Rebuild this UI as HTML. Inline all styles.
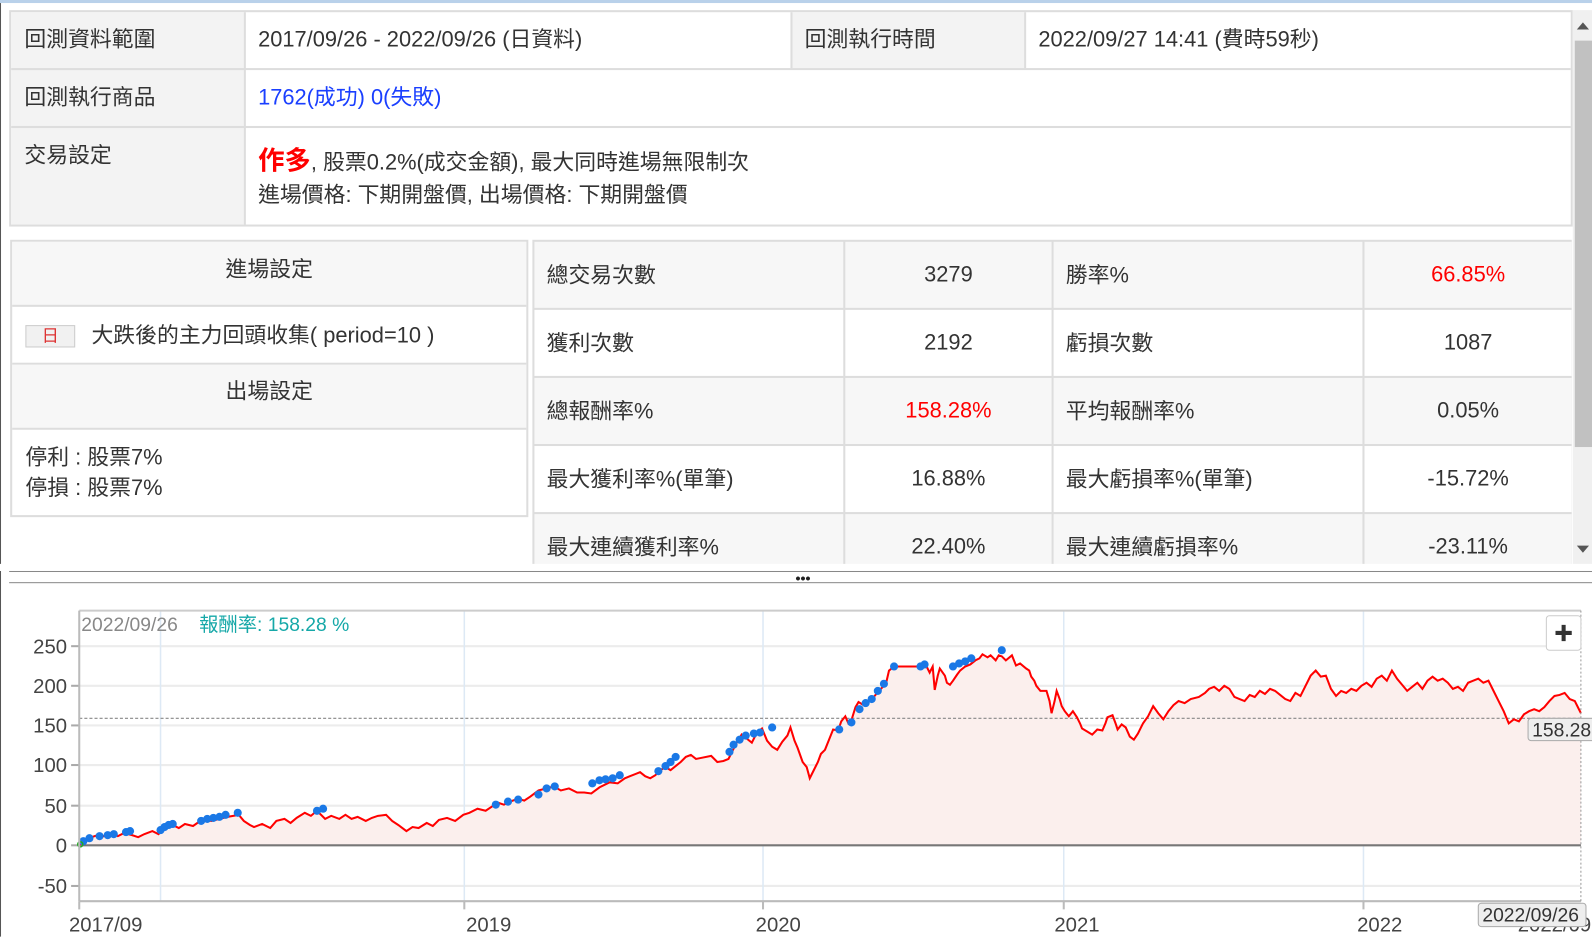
<!DOCTYPE html>
<html><head><meta charset="utf-8">
<style>
html,body{margin:0;padding:0;background:#fff;overflow:hidden;width:1592px;height:937px}
#w{position:absolute;left:0;top:0;width:1567px;height:922px;overflow:hidden;transform:scale(1.016);transform-origin:0 0;font-family:"Liberation Sans","Noto Sans CJK TC",sans-serif;color:#333}
.a{position:absolute;box-sizing:border-box}
.t{font-size:21.5px;line-height:1;white-space:nowrap}
.g{background:#f3f3f3}
.b{border:2px solid #ddd}
td{white-space:nowrap}
</style></head><body><div id="w">
<div class="a" style="left:0;top:0;width:1567px;height:3px;background:#b9d1ea"></div>
<div class="a" style="left:0;top:3px;width:1px;height:919px;background:#555"></div>

<div class="a b" style="left:9px;top:10px;width:1539px;height:213px"></div>
<div class="a g" style="left:11px;top:12px;width:229px;height:209px"></div>
<div class="a g" style="left:778px;top:12px;width:230px;height:55px"></div>
<div class="a" style="left:240px;top:12px;width:2px;height:209px;background:#ddd"></div>
<div class="a" style="left:778px;top:12px;width:2px;height:55px;background:#ddd"></div>
<div class="a" style="left:1008px;top:12px;width:2px;height:55px;background:#ddd"></div>
<div class="a" style="left:11px;top:67px;width:1535px;height:2px;background:#ddd"></div>
<div class="a" style="left:11px;top:124px;width:1535px;height:2px;background:#ddd"></div>
<div class="a t" style="left:24px;top:29px">回測資料範圍</div>
<div class="a t" style="left:254px;top:29px">2017/09/26 - 2022/09/26 (日資料)</div>
<div class="a t" style="left:792px;top:29px">回測執行時間</div>
<div class="a t" style="left:1022px;top:29px">2022/09/27 14:41 (費時59秒)</div>
<div class="a t" style="left:24px;top:86px">回測執行商品</div>
<div class="a t" style="left:254px;top:86px;color:#1a3fff">1762(成功) 0(失敗)</div>
<div class="a t" style="left:24px;top:143px">交易設定</div>
<div class="a t" style="left:254px;top:145px"><span style="color:#f00;font-size:26px;font-weight:bold">作多</span>, 股票0.2%(成交金額), 最大同時進場無限制次</div>
<div class="a t" style="left:254px;top:182px">進場價格: 下期開盤價, 出場價格: 下期開盤價</div>

<div class="a" style="left:1548px;top:10px;width:19px;height:545px;background:#f0f0f0"></div>
<div class="a" style="left:1550px;top:40px;width:17px;height:400px;background:#c1c1c1"></div>
<div class="a" style="left:1552px;top:22px;width:0;height:0;border-left:6px solid transparent;border-right:6px solid transparent;border-bottom:7px solid #555"></div>
<div class="a" style="left:1552px;top:537px;width:0;height:0;border-left:6px solid transparent;border-right:6px solid transparent;border-top:7px solid #555"></div>

<div class="a b" style="left:10px;top:236px;width:510px;height:273px;background:#fff"></div>
<div class="a" style="left:12px;top:238px;width:506px;height:62px;background:#f7f7f7"></div>
<div class="a" style="left:12px;top:300px;width:506px;height:2px;background:#ddd"></div>
<div class="a" style="left:12px;top:357px;width:506px;height:2px;background:#ddd"></div>
<div class="a" style="left:12px;top:359px;width:506px;height:62px;background:#f7f7f7"></div>
<div class="a" style="left:12px;top:421px;width:506px;height:2px;background:#ddd"></div>
<div class="a t" style="left:12px;width:506px;top:255px;text-align:center">進場設定</div>
<div class="a t" style="left:12px;width:506px;top:375px;text-align:center">出場設定</div>
<div class="a" style="left:25px;top:320px;width:49px;height:22px;background:#f1f1f1;border:1px solid #ccc;color:#d33;font-size:17px;text-align:center;line-height:20px">日</div>
<div class="a t" style="left:90px;top:320px">大跌後的主力回頭收集( period=10 )</div>
<div class="a t" style="left:25px;top:440px">停利 : 股票7%</div>
<div class="a t" style="left:25px;top:470px">停損 : 股票7%</div>

<div class="a" style="left:524px;top:236px;width:1023px;height:320px;background:#ddd;overflow:hidden">
<div style="position:absolute;left:2px;top:2px;width:1019px">
<table style="border-collapse:separate;border-spacing:2px 2px;margin:-2px;font-size:21.5px;width:1023px;table-layout:fixed">
<colgroup><col style="width:304px"><col style="width:203px"><col style="width:304px"><col style="width:204px"></colgroup>
<tr style="background:#f7f7f7;height:65px"><td style="padding:0 12px;vertical-align:top;padding-top:16px">總交易次數</td><td style="text-align:center">3279</td><td style="padding:0 12px;vertical-align:top;padding-top:16px">勝率%</td><td style="text-align:center;color:#f00">66.85%</td></tr>
<tr style="background:#fff;height:65px"><td style="padding:0 12px;vertical-align:top;padding-top:16px">獲利次數</td><td style="text-align:center">2192</td><td style="padding:0 12px;vertical-align:top;padding-top:16px">虧損次數</td><td style="text-align:center">1087</td></tr>
<tr style="background:#f7f7f7;height:65px"><td style="padding:0 12px;vertical-align:top;padding-top:16px">總報酬率%</td><td style="text-align:center;color:#f00">158.28%</td><td style="padding:0 12px;vertical-align:top;padding-top:16px">平均報酬率%</td><td style="text-align:center">0.05%</td></tr>
<tr style="background:#fff;height:65px"><td style="padding:0 12px;vertical-align:top;padding-top:16px">最大獲利率%(單筆)</td><td style="text-align:center">16.88%</td><td style="padding:0 12px;vertical-align:top;padding-top:16px">最大虧損率%(單筆)</td><td style="text-align:center">-15.72%</td></tr>
<tr style="background:#f7f7f7;height:65px"><td style="padding:0 12px;vertical-align:top;padding-top:16px">最大連續獲利率%</td><td style="text-align:center">22.40%</td><td style="padding:0 12px;vertical-align:top;padding-top:16px">最大連續虧損率%</td><td style="text-align:center">-23.11%</td></tr>
</table></div></div>
<div class="a" style="left:0;top:555px;width:1548px;height:7px;background:#fff"></div>

<div class="a" style="left:9px;top:562px;width:1558px;height:1px;background:#888"></div>
<div class="a" style="left:9px;top:573px;width:1558px;height:1px;background:#888"></div>
<div class="a" style="left:783px;top:563px;font-size:14px;line-height:12px;color:#222;font-weight:bold">•••</div>

<svg class="a" style="left:0;top:590px" width="1567" height="332" viewBox="0 590 1567 332" font-family="Liberation Sans, Noto Sans CJK TC, sans-serif">
<g stroke="#ececec" stroke-width="2">
<line x1="78" x2="1556" y1="636" y2="636"/><line x1="78" x2="1556" y1="675" y2="675"/><line x1="78" x2="1556" y1="714" y2="714"/><line x1="78" x2="1556" y1="753" y2="753"/><line x1="78" x2="1556" y1="793" y2="793"/><line x1="78" x2="1556" y1="872" y2="872"/>
</g>
<g stroke="#dde9f5" stroke-width="1.5">
<line x1="158" x2="158" y1="601" y2="887"/><line x1="457" x2="457" y1="601" y2="887"/><line x1="751" x2="751" y1="601" y2="887"/><line x1="1047" x2="1047" y1="601" y2="887"/><line x1="1342" x2="1342" y1="601" y2="887"/>
</g>
<g stroke="#aaa" stroke-width="2"><line x1="70" x2="78" y1="636" y2="636"/><line x1="70" x2="78" y1="675" y2="675"/><line x1="70" x2="78" y1="714" y2="714"/><line x1="70" x2="78" y1="753" y2="753"/><line x1="70" x2="78" y1="793" y2="793"/><line x1="70" x2="78" y1="832" y2="832"/><line x1="70" x2="78" y1="872" y2="872"/></g>
<polyline points="78,601 1556,601" stroke="#ccc" stroke-width="2" fill="none"/>
<polygon fill="#fbefed" stroke="none" points="78,832 84,826 90,824 96,822 102,823 110,820 116,823 122,820 130,822 136,824 142,821 150,818 156,821 162,815 170,812 176,815 182,811 190,813 200,806 208,808 216,806 224,804 235,802 240,808 246,812 250,814 258,811 266,815 272,808 280,806 286,810 292,805 300,800 306,803 312,798 320,806 326,803 334,806 340,802 346,806 352,804 360,808 366,805 372,803 380,802 386,808 392,812 400,818 406,814 412,815 420,810 426,813 432,807 440,805 448,808 456,802 462,800 470,796 478,798 484,794 490,790 496,792 502,789 510,786 516,788 522,784 530,778 538,776 545,774 552,778 560,776 568,780 575,780 582,781 590,775 600,770 608,771 615,766 620,764 630,760 635,764 640,766 645,763 650,758 655,755 660,758 670,750 675,745 680,743 685,747 690,746 700,744 706,750 712,749 717,747 725,731 730,723 735,727 740,731 745,721 750,717 755,729 760,735 765,738 770,730 775,724 778,716 782,729 785,736 790,750 794,755 797,766 801,758 805,750 808,742 812,738 816,728 820,718 825,719 828,710 832,705 835,712 838,709 842,696 845,691 850,694 855,691 860,686 865,680 870,675 872,673 875,660 880,656 912,656 915,662 918,656 920,679 923,665 925,658 930,665 932,672 935,674 938,670 942,664 945,660 950,656 955,654 960,650 964,648 967,644 972,647 975,645 980,650 983,645 986,646 990,650 996,645 1000,655 1004,653 1010,658 1013,660 1015,666 1018,670 1020,675 1024,680 1030,680 1033,690 1035,702 1038,690 1040,680 1043,688 1045,695 1048,700 1052,705 1056,700 1060,706 1063,712 1065,717 1070,720 1075,723 1080,718 1085,719 1088,712 1090,706 1095,704 1098,712 1100,718 1104,713 1108,716 1112,725 1116,728 1120,722 1123,716 1125,712 1130,705 1135,695 1140,702 1145,708 1150,700 1155,694 1160,690 1166,692 1172,688 1180,686 1186,682 1190,678 1195,676 1200,680 1205,675 1210,678 1215,686 1220,688 1225,690 1230,684 1235,686 1240,680 1245,683 1250,678 1255,680 1260,684 1265,688 1270,690 1275,682 1280,685 1285,675 1290,665 1295,660 1300,666 1305,665 1310,678 1315,685 1320,680 1325,682 1330,678 1335,680 1340,675 1345,672 1350,676 1355,668 1360,665 1365,670 1370,660 1375,668 1380,674 1385,680 1390,676 1395,672 1400,678 1405,670 1410,666 1415,670 1420,668 1425,672 1430,678 1435,676 1440,680 1445,672 1450,670 1455,668 1460,672 1465,670 1470,680 1475,690 1480,700 1485,712 1490,708 1495,710 1500,703 1505,700 1510,698 1515,700 1520,696 1525,690 1530,685 1535,684 1540,682 1545,688 1550,690 1553,696 1556,702 1556,832"/>
<line x1="78" x2="1556" y1="832" y2="832" stroke="#777" stroke-width="2"/>
<line x1="78" x2="1556" y1="707" y2="707" stroke="#888" stroke-width="1" stroke-dasharray="3,2"/>
<polyline fill="none" stroke="#f00" stroke-width="2" points="78,832 84,826 90,824 96,822 102,823 110,820 116,823 122,820 130,822 136,824 142,821 150,818 156,821 162,815 170,812 176,815 182,811 190,813 200,806 208,808 216,806 224,804 235,802 240,808 246,812 250,814 258,811 266,815 272,808 280,806 286,810 292,805 300,800 306,803 312,798 320,806 326,803 334,806 340,802 346,806 352,804 360,808 366,805 372,803 380,802 386,808 392,812 400,818 406,814 412,815 420,810 426,813 432,807 440,805 448,808 456,802 462,800 470,796 478,798 484,794 490,790 496,792 502,789 510,786 516,788 522,784 530,778 538,776 545,774 552,778 560,776 568,780 575,780 582,781 590,775 600,770 608,771 615,766 620,764 630,760 635,764 640,766 645,763 650,758 655,755 660,758 670,750 675,745 680,743 685,747 690,746 700,744 706,750 712,749 717,747 725,731 730,723 735,727 740,731 745,721 750,717 755,729 760,735 765,738 770,730 775,724 778,716 782,729 785,736 790,750 794,755 797,766 801,758 805,750 808,742 812,738 816,728 820,718 825,719 828,710 832,705 835,712 838,709 842,696 845,691 850,694 855,691 860,686 865,680 870,675 872,673 875,660 880,656 912,656 915,662 918,656 920,679 923,665 925,658 930,665 932,672 935,674 938,670 942,664 945,660 950,656 955,654 960,650 964,648 967,644 972,647 975,645 980,650 983,645 986,646 990,650 996,645 1000,655 1004,653 1010,658 1013,660 1015,666 1018,670 1020,675 1024,680 1030,680 1033,690 1035,702 1038,690 1040,680 1043,688 1045,695 1048,700 1052,705 1056,700 1060,706 1063,712 1065,717 1070,720 1075,723 1080,718 1085,719 1088,712 1090,706 1095,704 1098,712 1100,718 1104,713 1108,716 1112,725 1116,728 1120,722 1123,716 1125,712 1130,705 1135,695 1140,702 1145,708 1150,700 1155,694 1160,690 1166,692 1172,688 1180,686 1186,682 1190,678 1195,676 1200,680 1205,675 1210,678 1215,686 1220,688 1225,690 1230,684 1235,686 1240,680 1245,683 1250,678 1255,680 1260,684 1265,688 1270,690 1275,682 1280,685 1285,675 1290,665 1295,660 1300,666 1305,665 1310,678 1315,685 1320,680 1325,682 1330,678 1335,680 1340,675 1345,672 1350,676 1355,668 1360,665 1365,670 1370,660 1375,668 1380,674 1385,680 1390,676 1395,672 1400,678 1405,670 1410,666 1415,670 1420,668 1425,672 1430,678 1435,676 1440,680 1445,672 1450,670 1455,668 1460,672 1465,670 1470,680 1475,690 1480,700 1485,712 1490,708 1495,710 1500,703 1505,700 1510,698 1515,700 1520,696 1525,690 1530,685 1535,684 1540,682 1545,688 1550,690 1553,696 1556,702"/>
<g fill="#1a78e6">
<circle cx="82" cy="828" r="4"/><circle cx="88" cy="825" r="4"/><circle cx="98" cy="823" r="4"/><circle cx="106" cy="822" r="4"/><circle cx="112" cy="821" r="4"/><circle cx="124" cy="819" r="4"/><circle cx="128" cy="818" r="4"/>
<circle cx="158" cy="817" r="4"/><circle cx="162" cy="814" r="4"/><circle cx="166" cy="812" r="4"/><circle cx="170" cy="811" r="4"/>
<circle cx="198" cy="808" r="4"/><circle cx="204" cy="806" r="4"/><circle cx="210" cy="805" r="4"/><circle cx="216" cy="804" r="4"/><circle cx="222" cy="802" r="4"/><circle cx="234" cy="800" r="4"/>
<circle cx="312" cy="798" r="4"/><circle cx="318" cy="796" r="4"/>
<circle cx="488" cy="792" r="4"/><circle cx="500" cy="789" r="4"/><circle cx="510" cy="787" r="4"/><circle cx="530" cy="782" r="4"/><circle cx="538" cy="776" r="4"/><circle cx="546" cy="774" r="4"/>
<circle cx="583" cy="771" r="4"/><circle cx="590" cy="768" r="4"/><circle cx="596" cy="767" r="4"/><circle cx="603" cy="766" r="4"/><circle cx="610" cy="763" r="4"/>
<circle cx="648" cy="759" r="4"/><circle cx="655" cy="754" r="4"/><circle cx="660" cy="750" r="4"/><circle cx="665" cy="745" r="4"/>
<circle cx="718" cy="740" r="4"/><circle cx="722" cy="733" r="4"/><circle cx="728" cy="728" r="4"/><circle cx="734" cy="724" r="4"/><circle cx="742" cy="722" r="4"/><circle cx="748" cy="721" r="4"/><circle cx="760" cy="716" r="4"/>
<circle cx="826" cy="718" r="4"/><circle cx="838" cy="711" r="4"/><circle cx="846" cy="698" r="4"/><circle cx="852" cy="692" r="4"/><circle cx="858" cy="688" r="4"/><circle cx="864" cy="680" r="4"/><circle cx="870" cy="673" r="4"/><circle cx="880" cy="656" r="4"/>
<circle cx="906" cy="656" r="4"/><circle cx="910" cy="654" r="4"/><circle cx="938" cy="656" r="4"/><circle cx="944" cy="653" r="4"/><circle cx="950" cy="651" r="4"/><circle cx="956" cy="648" r="4"/><circle cx="986" cy="640" r="4"/>
</g>
<circle cx="79" cy="831" r="2.5" fill="none" stroke="#2a2" stroke-width="1.5"/>
<line x1="78" x2="78" y1="601" y2="887" stroke="#bbb" stroke-width="2"/>
<line x1="78" x2="1556" y1="887" y2="887" stroke="#bbb" stroke-width="2"/>
<line x1="1556" x2="1556" y1="601" y2="887" stroke="#999" stroke-width="1" stroke-dasharray="2,2"/>
<g stroke="#bbb" stroke-width="2"><line x1="78" x2="78" y1="887" y2="895"/><line x1="457" x2="457" y1="887" y2="895"/><line x1="751" x2="751" y1="887" y2="895"/><line x1="1047" x2="1047" y1="887" y2="895"/><line x1="1342" x2="1342" y1="887" y2="895"/></g>
<g font-size="20" fill="#444" text-anchor="end">
<text x="66" y="643">250</text><text x="66" y="682">200</text><text x="66" y="721">150</text><text x="66" y="760">100</text><text x="66" y="800">50</text><text x="66" y="839">0</text><text x="66" y="879">-50</text>
</g>
<g font-size="20" fill="#444" text-anchor="middle">
<text x="104" y="917">2017/09</text><text x="481" y="917">2019</text><text x="766" y="917">2020</text><text x="1060" y="917">2021</text><text x="1358" y="917">2022</text><text x="1530" y="917">2022/09</text>
</g>
<text x="80" y="621" font-size="19" fill="#888">2022/09/26</text>
<text x="196" y="621" font-size="19" fill="#16a8a8">報酬率: 158.28 %</text>
<rect x="1522" y="606" width="34" height="34" rx="3" fill="#fff" stroke="#ccc"/>
<path d="M1539 615v16M1531 623h16" stroke="#333" stroke-width="4"/>
<rect x="1504" y="707" width="70" height="22" rx="3" fill="#eee" stroke="#aaa"/>
<text x="1508" y="725" font-size="19" fill="#333">158.28</text>
<rect x="1455" y="889" width="106" height="23" rx="3" fill="#eee" stroke="#aaa"/>
<text x="1459" y="907" font-size="19" fill="#333">2022/09/26</text>
</svg>
</div></body></html>
